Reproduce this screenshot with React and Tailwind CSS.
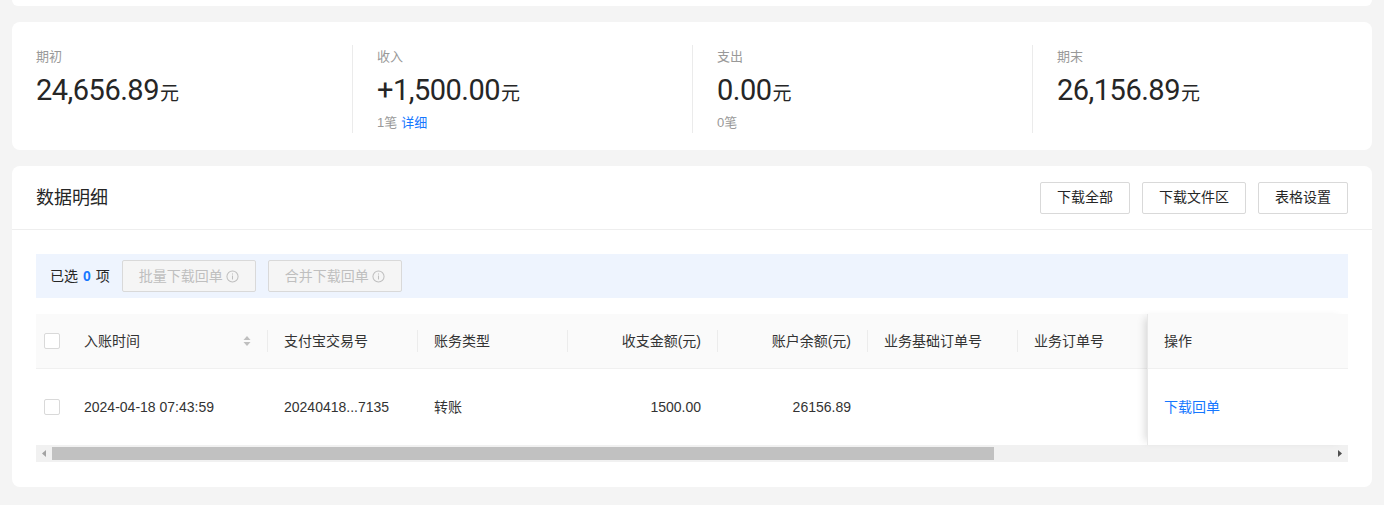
import React from "react";

const font = "font-['Liberation_Sans','Noto_Sans_CJK_SC',sans-serif]";

function Stat({ label, value, sub, link, first }) {
  return (
    <div className={`px-6 my-[23px] h-[88px] ${first ? "" : "border-l border-[#ebebeb]"}`}>
      <div className="pt-[2px] text-[13px] leading-[20px] text-[#999]">{label}</div>
      <div className="mt-[5px] h-[36px] flex items-baseline text-[#262626]">
        <span className="font-['Roboto','Noto_Sans_CJK_SC',sans-serif] text-[29px] tracking-[-0.5px] leading-[36px]">{value}</span>
        <span className="text-[19px] ml-[1px]">元</span>
      </div>
      {sub !== undefined && (
        <div className="mt-[5px] text-[13px] leading-[20px] text-[#999]">
          {sub}
          {link && <span className="ml-[4px] text-[#1677ff]">{link}</span>}
        </div>
      )}
    </div>
  );
}

function InfoIcon() {
  return (
    <svg width="13" height="13" viewBox="0 0 14 14" className="ml-[3px]">
      <circle cx="7" cy="7" r="6" fill="none" stroke="currentColor" strokeWidth="1.1" />
      <rect x="6.45" y="6" width="1.1" height="4.2" fill="currentColor" />
      <rect x="6.45" y="3.7" width="1.1" height="1.2" fill="currentColor" />
    </svg>
  );
}

function Checkbox() {
  return <div className="w-4 h-4 border border-[#d9d9d9] rounded-[2px] bg-white" />;
}

function SortIcon() {
  return (
    <svg width="8" height="12" viewBox="0 0 8 12">
      <path d="M4 1 L7.5 5 L0.5 5 Z" fill="#bfbfbf" />
      <path d="M4 11 L7.5 7 L0.5 7 Z" fill="#bfbfbf" />
    </svg>
  );
}

function HeadCell({ w, children, right, last }) {
  return (
    <div className={`${w} shrink-0 flex items-center`}>
      <div className={`flex-1 px-4 flex items-center ${right ? "justify-end" : "justify-between"}`}>{children}</div>
      {!last && <div className="w-px h-[22px] bg-[#ececec]" />}
    </div>
  );
}

function BodyCell({ w, children, right }) {
  return (
    <div className={`${w} shrink-0 px-4 flex items-center ${right ? "justify-end pr-[17px]" : ""}`}>{children}</div>
  );
}

export default function App() {
  return (
    <div className={`${font} bg-[#f4f4f4] h-[505px] w-[1384px] px-3 overflow-hidden`}>
      <div className="h-[6px] bg-white rounded-b-lg" />

      <div className="mt-4 bg-white rounded-lg h-[128px] grid grid-cols-4">
        <Stat first label="期初" value="24,656.89" />
        <Stat label="收入" value="+1,500.00" sub="1笔" link="详细" />
        <Stat label="支出" value="0.00" sub="0笔" />
        <Stat label="期末" value="26,156.89" />
      </div>

      <div className="mt-4 bg-white rounded-lg h-[321px]">
        <div className="h-[64px] border-b border-[#eeeeee] px-6 flex items-center justify-between">
          <div className="text-[18px] text-[#262626] pt-[2px]">数据明细</div>
          <div className="flex gap-3 text-[14px] text-[#262626]">
            <button className="h-[32px] px-4 border border-[#d9d9d9] rounded-[2px] bg-white">下载全部</button>
            <button className="h-[32px] px-4 border border-[#d9d9d9] rounded-[2px] bg-white">下载文件区</button>
            <button className="h-[32px] px-4 border border-[#d9d9d9] rounded-[2px] bg-white">表格设置</button>
          </div>
        </div>

        <div className="px-6 pt-6">
          <div className="h-[44px] bg-[#eef4fe] pl-[14px] flex items-center text-[14px] text-[#262626]">
            <span>已选</span>
            <span className="mx-[5px] text-[#1677ff] font-bold">0</span>
            <span>项</span>
            <button className="ml-3 h-[32px] px-4 border border-[#d9d9d9] rounded-[2px] bg-[#f5f5f5] text-[#bfbfbf] flex items-center">
              批量下载回单<InfoIcon />
            </button>
            <button className="ml-3 h-[32px] px-4 border border-[#d9d9d9] rounded-[2px] bg-[#f5f5f5] text-[#bfbfbf] flex items-center">
              合并下载回单<InfoIcon />
            </button>
          </div>

          <div className="mt-4 text-[14px] text-[#333]">
            <div className="flex">
              <div className="w-[1111px] overflow-hidden">
                <div className="flex h-[55px] bg-[#fafafa] border-b border-[#f0f0f0] w-[1200px]">
                  <div className="w-[32px] shrink-0 pl-2 flex items-center"><Checkbox /></div>
                  <HeadCell w="w-[200px]"><span>入账时间</span><SortIcon /></HeadCell>
                  <HeadCell w="w-[150px]"><span>支付宝交易号</span></HeadCell>
                  <HeadCell w="w-[150px]"><span>账务类型</span></HeadCell>
                  <HeadCell w="w-[150px]" right><span>收支金额(元)</span></HeadCell>
                  <HeadCell w="w-[150px]" right><span>账户余额(元)</span></HeadCell>
                  <HeadCell w="w-[150px]"><span>业务基础订单号</span></HeadCell>
                  <HeadCell w="w-[150px]" last><span>业务订单号</span></HeadCell>
                </div>
                <div className="flex h-[76px] w-[1200px]">
                  <div className="w-[32px] shrink-0 pl-2 flex items-center"><Checkbox /></div>
                  <BodyCell w="w-[200px]">2024-04-18 07:43:59</BodyCell>
                  <BodyCell w="w-[150px]">20240418...7135</BodyCell>
                  <BodyCell w="w-[150px]">转账</BodyCell>
                  <BodyCell w="w-[150px]" right>1500.00</BodyCell>
                  <BodyCell w="w-[150px]" right>26156.89</BodyCell>
                  <BodyCell w="w-[150px]"></BodyCell>
                  <BodyCell w="w-[150px]"></BodyCell>
                </div>
              </div>
              <div className="w-[201px] shrink-0 border-l border-[#e8e8e8] shadow-[-6px_0_8px_-4px_rgba(0,0,0,0.15)]">
                <div className="h-[55px] bg-[#fafafa] border-b border-[#f0f0f0] pl-4 flex items-center">操作</div>
                <div className="h-[76px] pl-4 flex items-center text-[#1677ff]">下载回单</div>
              </div>
            </div>

            <div className="h-[17px] bg-[#f1f1f1] flex items-center">
              <div className="w-[16px] h-full flex items-center justify-center">
                <svg width="4" height="7" viewBox="0 0 4 7"><path d="M4 0 L0 3.5 L4 7 Z" fill="#a3a3a3" /></svg>
              </div>
              <div className="w-[942px] h-[13px] bg-[#c1c1c1]" />
              <div className="flex-1" />
              <div className="w-[16px] h-full flex items-center justify-center">
                <svg width="4" height="7" viewBox="0 0 4 7"><path d="M0 0 L4 3.5 L0 7 Z" fill="#505050" /></svg>
              </div>
            </div>
          </div>
        </div>
      </div>
    </div>
  );
}
